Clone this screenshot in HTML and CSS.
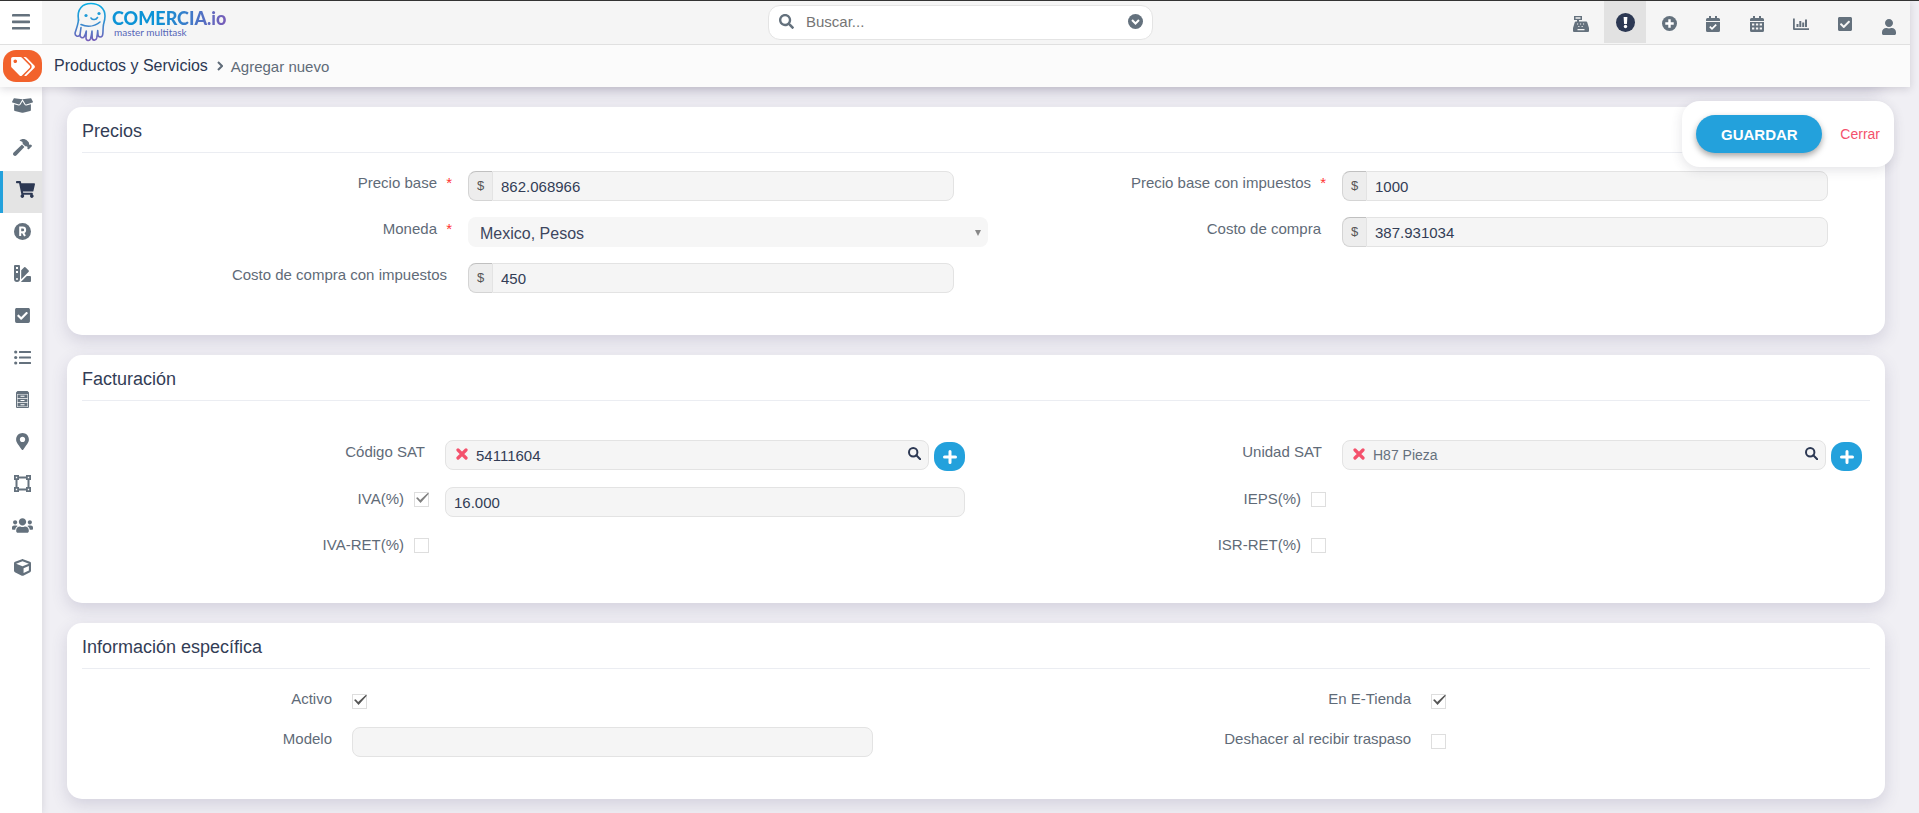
FILE: index.html
```html
<!DOCTYPE html>
<html lang="es">
<head>
<meta charset="utf-8">
<meta name="viewport" content="width=device-width, initial-scale=1">
<title>Comercia.io - Productos y Servicios</title>
<link rel="stylesheet" href="styles.css">
</head>
<body>
<header class="header">
  <div class="topbar">
    <button class="menu-toggle" type="button" aria-label="Menú">
      <svg class="icon icon--18" viewBox="0 0 18 16"><path d="M1 0h16a1 1 0 0 1 1 1v1a.6.6 0 0 1-.6.6H.6A.6.6 0 0 1 0 2V1a1 1 0 0 1 1-1zM.6 6.5h16.800a.6.6 0 0 1 .6.6v1.500a.6.6 0 0 1-.6.6H.6a.6.6 0 0 1-.6-.6V7.100a.6.6 0 0 1 .6-.6zM.6 13h16.800a.6.6 0 0 1 .6.6V15a.6.6 0 0 1-.6.6H.6A.6.6 0 0 1 0 15v-1.400a.6.6 0 0 1 .6-.6z"/></svg>
    </button>
    <a class="logo" href="#" aria-label="Comercia.io">
      <svg class="logo-mark" viewBox="0 0 33 39">
        <defs><linearGradient id="ink" x1="0" y1="0" x2="0" y2="39" gradientUnits="userSpaceOnUse"><stop offset="0" stop-color="#08b0e6"/><stop offset=".5" stop-color="#2f8fd0"/><stop offset="1" stop-color="#7a5cb8"/></linearGradient></defs>
        <g fill="none" stroke="url(#ink)" stroke-width="1.600" stroke-linecap="round" stroke-linejoin="round">
          <path d="M4.500 17.500C2.500 6 9 1 17 1s14 5 14 12.500c0 3.500-.8 6-1.500 8.500-.6 3-.3 6-.7 9.500-.3 4-4.600 4-4.800.5l-.3-4c-.2 3-.5 5-1 7.500-.7 3-4.600 2.800-4.500-.5l-.2-6.500c-.4 3-.8 5.500-1.500 7.800-1 2.700-4.700 2-4.500-1.200l.3-6.600c-.4 2-1.100 4-2 5.500-1.500 2.300-4.700 1-4.300-1.800L7 25"/>
          <path d="M4.500 17.500C4 22 2.500 26 1.200 30c-.8 3.500 3 5 4.600 2.300"/>
          <path d="M7 22c5.500 2.500 13 2.500 19-2.500"/>
          <path d="M17 15.500c1.500 2.200 5 2 6.500-.5"/>
        </g>
        <circle cx="12" cy="13" r="1.600" fill="#1e9bd8"/><circle cx="25" cy="11" r="1.600" fill="#1e9bd8"/>
      </svg>
      <span class="logo-words">
        <span class="logo-name">COMERCIA.io</span>
        <span class="logo-tag">master multitask</span>
      </span>
    </a>
    <form class="search" role="search">
      <svg class="icon icon--15" viewBox="0 0 512 512"><path d="M505 442.700L405.300 343c-4.500-4.500-10.600-7-17-7H372c27.600-35.300 44-79.700 44-128C416 93.100 322.900 0 208 0S0 93.100 0 208s93.100 208 208 208c48.300 0 92.700-16.400 128-44v16.300c0 6.400 2.500 12.500 7 17l99.700 99.700c9.400 9.400 24.600 9.400 33.900 0l28.300-28.300c9.400-9.400 9.400-24.600.1-34zM208 336c-70.700 0-128-57.200-128-128 0-70.700 57.200-128 128-128 70.700 0 128 57.200 128 128 0 70.700-57.200 128-128 128z"/></svg>
      <input class="search-input" type="text" placeholder="Buscar..." aria-label="Buscar">
      <button class="icon-button" type="button" aria-label="Opciones de búsqueda">
        <svg class="icon icon--15" viewBox="0 0 16 16"><circle cx="8" cy="8" r="8"/><path d="M4.300 6.500L8 10.200l3.700-3.700" fill="none" stroke="#fff" stroke-width="2.200"/></svg>
      </button>
    </form>
    <nav class="tools" aria-label="Herramientas">
      <a class="tool" href="#" aria-label="Caja"><svg class="icon icon--16" viewBox="0 0 16 16"><path fill-rule="evenodd" d="M1 0h8v4H6v1.500h7.200a1 1 0 0 1 1 .8L16 12v3a1 1 0 0 1-1 1H1a1 1 0 0 1-1-1v-3l1.800-5.700a1 1 0 0 1 1-.8H4V4H1zM2.500 1.300v1.400h5V1.300zM4 7.500v1.100h1.100V7.500zm3 0v1.100h1.100V7.500zm3 0v1.100h1.100V7.500zM5.300 10v1h1.100v-1zm3.300 0v1h1.100v-1zM4.500 13v1.200h7V13z"/></svg></a>
      <a class="tool tool--active" href="#" aria-label="Avisos"><svg class="icon icon--19" viewBox="0 0 19 19"><circle cx="9.500" cy="9.500" r="9.500"/><path fill="#fff" d="M7.600 4h3.800l-.5 7H8.100z"/><circle cx="9.500" cy="13.500" r="1.700" fill="#fff"/></svg></a>
      <a class="tool" href="#" aria-label="Agregar"><svg class="icon icon--15" viewBox="0 0 16 16"><circle cx="8" cy="8" r="8"/><path d="M8 3.500v9M3.500 8h9" stroke="#fff" stroke-width="2.600"/></svg></a>
      <a class="tool" href="#" aria-label="Agenda"><svg class="icon icon--16" viewBox="0 0 16 16"><path fill-rule="evenodd" d="M4 0h2v2h4V0h2v2h1.500A1.500 1.500 0 0 1 15 3.500V5H1V3.500A1.500 1.500 0 0 1 2.500 2H4zM1 6h14v8.500a1.500 1.500 0 0 1-1.500 1.500h-11A1.500 1.500 0 0 1 1 14.500z"/><path d="M4.800 10.700l2.200 2.200 4.200-4.200" fill="none" stroke="#fff" stroke-width="1.700"/></svg></a>
      <a class="tool" href="#" aria-label="Calendario"><svg class="icon icon--16" viewBox="0 0 16 16"><path fill-rule="evenodd" d="M4 0h2v2h4V0h2v2h1.500A1.500 1.500 0 0 1 15 3.500V5H1V3.500A1.500 1.500 0 0 1 2.500 2H4zM1 6h14v8.500a1.500 1.500 0 0 1-1.500 1.500h-11A1.500 1.500 0 0 1 1 14.500zM3 7.500v2h2.300v-2zm3.900 0v2h2.300v-2zm3.800 0v2H13v-2zM3 11.500v2h2.300v-2zm3.900 0v2h2.300v-2zm3.800 0v2H13v-2z"/></svg></a>
      <a class="tool" href="#" aria-label="Reportes"><svg class="icon icon--16" viewBox="0 0 16 16"><path d="M0 2.500h1.800v9.700H16V14H1a1 1 0 0 1-1-1zM3.500 8h2v3h-2zM6.300 5h2v6h-2zM9.200 6.500h2V11h-2zM12 3.500h2V11h-2z"/></svg></a>
      <a class="tool" href="#" aria-label="Tareas"><svg class="icon icon--16" viewBox="0 0 448 512"><path d="M400 480H48c-26.510 0-48-21.490-48-48V80c0-26.510 21.490-48 48-48h352c26.510 0 48 21.490 48 48v352c0 26.510-21.490 48-48 48zm-204.686-98.059l184-184c6.248-6.248 6.248-16.379 0-22.627l-22.627-22.627c-6.248-6.248-16.379-6.249-22.628 0L184 302.745l-70.059-70.059c-6.248-6.248-16.379-6.248-22.628 0l-22.627 22.627c-6.248 6.248-6.248 16.379 0 22.627l104 104c6.249 6.250 16.379 6.250 22.628.001z"/></svg></a>
      <a class="tool tool--user" href="#" aria-label="Usuario"><svg class="icon icon--16" viewBox="0 0 448 512"><path d="M224 256c70.700 0 128-57.300 128-128S294.700 0 224 0 96 57.300 96 128s57.300 128 128 128zm89.600 32h-16.700c-22.200 10.200-46.900 16-72.900 16s-50.600-5.800-72.900-16h-16.700C60.200 288 0 348.200 0 422.400V464c0 26.500 21.500 48 48 48h352c26.500 0 48-21.500 48-48v-41.600c0-74.200-60.200-134.400-134.400-134.400z"/></svg></a>
    </nav>
  </div>
  <div class="crumbs">
    <span class="crumb-badge"><svg class="icon icon--tags" viewBox="0 0 640 512"><path d="M497.941 225.941L286.059 14.059A48 48 0 0 0 252.118 0H48C21.490 0 0 21.490 0 48v204.118a48 48 0 0 0 14.059 33.941l211.882 211.882c18.744 18.745 49.136 18.746 67.882 0l204.118-204.118c18.745-18.745 18.745-49.137 0-67.882zM112 160c-26.510 0-48-21.490-48-48s21.490-48 48-48 48 21.490 48 48-21.490 48-48 48zm513.941 133.823L421.823 497.941c-18.745 18.745-49.137 18.745-67.882 0l-.36-.36L527.640 323.522c16.999-16.999 26.360-39.600 26.360-63.640s-9.362-46.641-26.360-63.640L331.397 0h48.721a48 48 0 0 1 33.941 14.059l211.882 211.882c18.745 18.745 18.745 49.137 0 67.882z"/></svg></span>
    <a class="crumb-link" href="#">Productos y Servicios</a>
    <svg class="crumb-arrow" viewBox="0 0 6 10"><path d="M1 1l4 4-4 4"/></svg>
    <span class="crumb-current">Agregar nuevo</span>
  </div>
</header>

<div class="body">
  <nav class="sidebar" aria-label="Secciones">
    <a class="side" href="#" aria-label="Productos"><svg class="icon icon--21" viewBox="0 0 640 512"><path d="M425.700 256c-16.900 0-32.800-9-41.400-23.400L320 126l-64.200 106.600c-8.700 14.500-24.600 23.500-41.500 23.500-4.500 0-9-.6-13.300-1.900L64 215v178c0 14.700 10 27.500 24.200 31l216.200 54.100c10.200 2.500 20.900 2.500 31 0L551.800 424c14.200-3.600 24.200-16.400 24.200-31V215l-137 39.100c-4.300 1.300-8.800 1.900-13.300 1.900zm212.600-112.200L586.800 41c-3.100-6.200-9.800-9.800-16.700-8.900L320 64l91.700 152.100c3.800 6.300 11.400 9.300 18.500 7.300l197.900-56.500c9.900-2.900 14.700-13.900 10.200-23.100zM53.200 41L1.700 143.800c-4.600 9.200.3 20.200 10.100 23l197.900 56.500c7.100 2 14.700-1 18.500-7.300L320 64 69.800 32.100c-6.900-.8-13.500 2.700-16.600 8.900z"/></svg></a>
    <a class="side" href="#" aria-label="Servicios"><svg class="icon icon--19" viewBox="0 0 576 512"><path d="M571.310 193.940l-22.630-22.630c-6.250-6.250-16.380-6.250-22.630 0l-11.310 11.310-28.900-28.900c5.630-21.310.36-44.900-16.350-61.610l-45.250-45.250c-62.480-62.480-163.790-62.480-226.280 0l90.510 45.250v18.750c0 16.970 6.740 33.250 18.750 45.250l49.140 49.140c16.710 16.710 40.300 21.980 61.610 16.350l28.900 28.900-11.310 11.310c-6.250 6.250-6.250 16.380 0 22.630l22.630 22.630c6.250 6.250 16.380 6.250 22.630 0l90.510-90.510c6.230-6.240 6.230-16.370-.02-22.620zm-286.720-15.200c-3.700-3.700-6.840-7.790-9.850-11.950L19.640 404.960c-25.570 23.880-26.260 64.190-1.530 88.930s65.050 24.050 88.920-1.530l238.130-255.070c-3.960-2.910-7.900-5.870-11.440-9.410l-49.130-49.140z"/></svg></a>
    <a class="side side--active" href="#" aria-label="Ventas"><svg class="icon icon--19" viewBox="0 0 576 512"><path d="M528.120 301.319l47.273-208C578.806 78.301 567.391 64 551.990 64H159.208l-9.166-44.810C147.758 8.021 137.930 0 126.529 0H24C10.745 0 0 10.745 0 24v16c0 13.255 10.745 24 24 24h69.883l70.248 343.435C147.325 417.100 136 435.222 136 456c0 30.928 25.072 56 56 56s56-25.072 56-56c0-15.674-6.447-29.835-16.824-40h209.647C430.447 426.165 424 440.326 424 456c0 30.928 25.072 56 56 56s56-25.072 56-56c0-22.172-12.888-41.332-31.579-50.405l5.517-24.276c3.413-15.018-8.002-29.319-23.403-29.319H218.117l-6.545-32h293.145c11.206 0 20.920-7.754 23.403-18.681z"/></svg></a>
    <a class="side" href="#" aria-label="Marcas"><svg class="icon icon--17" viewBox="0 0 17 17"><circle cx="8.500" cy="8.500" r="8.500"/><path d="M6.200 13V4.600h2.600a2.300 2.300 0 0 1 0 4.700H6.200M8.800 9.300L11 13" fill="none" stroke="#fff" stroke-width="2"/></svg></a>
    <a class="side" href="#" aria-label="Colores"><svg class="icon icon--17" viewBox="0 0 17 17"><path fill-rule="evenodd" d="M1 0h4a1 1 0 0 1 1 1v13a3 3 0 0 1-6 0V1a1 1 0 0 1 1-1zM2 2v2h2V2zm0 4v2h2V6zm1 7a1 1 0 1 0 0 2 1 1 0 0 0 0-2z"/><path d="M7.200 5.300l3-3a.9.9 0 0 1 1.200 0l3.300 3.300a.9.9 0 0 1 0 1.200l-7.500 7.500zM16 11a1 1 0 0 1 1 1v4a1 1 0 0 1-1 1H6.800l6-6z"/></svg></a>
    <a class="side" href="#" aria-label="Tareas"><svg class="icon icon--17" viewBox="0 0 448 512"><path d="M400 480H48c-26.510 0-48-21.490-48-48V80c0-26.510 21.490-48 48-48h352c26.510 0 48 21.490 48 48v352c0 26.510-21.490 48-48 48zm-204.686-98.059l184-184c6.248-6.248 6.248-16.379 0-22.627l-22.627-22.627c-6.248-6.248-16.379-6.249-22.628 0L184 302.745l-70.059-70.059c-6.248-6.248-16.379-6.248-22.628 0l-22.627 22.627c-6.248 6.248-6.248 16.379 0 22.627l104 104c6.249 6.250 16.379 6.250 22.628.001z"/></svg></a>
    <a class="side" href="#" aria-label="Listas"><svg class="icon icon--17" viewBox="0 0 17 17"><circle cx="1.700" cy="3" r="1.600"/><circle cx="1.700" cy="8.500" r="1.600"/><circle cx="1.700" cy="14" r="1.600"/><path d="M5.500 2h11a.5.5 0 0 1 .5.500v1a.5.5 0 0 1-.5.500h-11a.5.5 0 0 1-.5-.5v-1a.5.5 0 0 1 .5-.5zm0 5.500h11a.5.5 0 0 1 .5.500v1a.5.5 0 0 1-.5.500h-11A.5.5 0 0 1 5 9V8a.5.5 0 0 1 .5-.5zm0 5.500h11a.5.5 0 0 1 .5.500v1a.5.5 0 0 1-.5.500h-11a.5.5 0 0 1-.5-.5v-1a.5.5 0 0 1 .5-.5z"/></svg></a>
    <a class="side" href="#" aria-label="Almacén"><svg class="icon icon--17" viewBox="0 0 17 17"><path fill-rule="evenodd" d="M3.500 0h10L15 1.500V16a1 1 0 0 1-1 1H3a1 1 0 0 1-1-1V1.500zM3.100 3v12.900h10.800V3z"/><path fill-rule="evenodd" d="M3.600 3.500h9.800v3.600H3.600zm2.900 1.300v1h4v-1zM3.600 7.800h9.800v3.500H3.600zM6.500 9v1h4V9zM3.600 12h9.800v3.400H3.600zm2.900 1.200v1h4v-1z"/></svg></a>
    <a class="side" href="#" aria-label="Ubicaciones"><svg class="icon icon--17" viewBox="0 0 384 512"><path d="M172.268 501.670C26.970 291.031 0 269.413 0 192 0 85.961 85.961 0 192 0s192 85.961 192 192c0 77.413-26.970 99.031-172.268 309.670-9.535 13.774-29.930 13.773-39.464 0zM192 272c44.183 0 80-35.817 80-80s-35.817-80-80-80-80 35.817-80 80 35.817 80 80 80z"/></svg></a>
    <a class="side" href="#" aria-label="Zonas"><svg class="icon icon--17" viewBox="0 0 17 17"><path fill-rule="evenodd" d="M0 0h5v1.500h7V0h5v5h-1.500v7H17v5h-5v-1.500H5V17H0v-5h1.500V5H0zm5 3.500V5H3.500v7H5v1.500h7V12h1.500V5H12V3.500zM1.800 1.800v1.400h1.400V1.800zm12 0v1.400h1.400V1.800zm-12 12v1.400h1.400v-1.400zm12 0v1.400h1.400v-1.400z"/></svg></a>
    <a class="side" href="#" aria-label="Clientes"><svg class="icon icon--21" viewBox="0 0 640 512"><path d="M96 224c35.300 0 64-28.700 64-64s-28.700-64-64-64-64 28.700-64 64 28.700 64 64 64zm448 0c35.300 0 64-28.700 64-64s-28.700-64-64-64-64 28.700-64 64 28.700 64 64 64zm32 32h-64c-17.600 0-33.500 7.100-45.100 18.600 40.300 22.100 68.900 62 75.100 109.400h66c17.700 0 32-14.300 32-32v-32c0-35.300-28.700-64-64-64zm-256 0c61.900 0 112-50.100 112-112S381.900 32 320 32 208 82.100 208 144s50.100 112 112 112zm76.800 32h-8.300c-20.800 10-43.900 16-68.500 16s-47.600-6-68.500-16h-8.300C179.600 288 128 339.600 128 403.200V432c0 26.500 21.500 48 48 48h288c26.500 0 48-21.500 48-48v-28.800c0-63.600-51.600-115.200-115.200-115.200zm-223.700-13.400C161.500 263.100 145.600 256 128 256H64c-35.300 0-64 28.700-64 64v32c0 17.700 14.300 32 32 32h65.900c6.300-47.400 34.900-87.300 75.200-109.400z"/></svg></a>
    <a class="side" href="#" aria-label="Paquetes"><svg class="icon icon--17" viewBox="0 0 512 512"><path d="M239.100 6.300l-208 78c-18.700 7-31.100 25-31.100 45v225.100c0 18.200 10.300 34.800 26.500 42.900l208 104c13.500 6.800 29.400 6.800 42.900 0l208-104c16.300-8.100 26.500-24.800 26.500-42.900V129.300c0-20-12.400-37.900-31.100-44.900l-208-78C262 2.200 250 2.200 239.100 6.300zM256 68.400l192 72v1.100l-192 78-192-78v-1.100l192-72zm32 356V275.500l160-65v133.900l-160 80z"/></svg></a>
  </nav>

  <main class="content">
    <div class="card-tail"></div>

    <section class="card">
      <h2 class="card-title">Precios</h2>
      <div class="fields fields--prices">
        <label class="label label--required" for="base">Precio base <span class="star">*</span></label>
        <div class="money"><span class="money-sign">$</span><input class="money-input" id="base" type="text" value="862.068966"></div>
        <label class="label label--required" for="base-tax">Precio base con impuestos <span class="star">*</span></label>
        <div class="money"><span class="money-sign">$</span><input class="money-input" id="base-tax" type="text" value="1000"></div>

        <label class="label label--required" for="currency">Moneda <span class="star">*</span></label>
        <div class="select"><select class="select-box" id="currency"><option>Mexico, Pesos</option></select></div>
        <label class="label" for="cost">Costo de compra</label>
        <div class="money"><span class="money-sign">$</span><input class="money-input" id="cost" type="text" value="387.931034"></div>

        <label class="label" for="cost-tax">Costo de compra con impuestos</label>
        <div class="money"><span class="money-sign">$</span><input class="money-input" id="cost-tax" type="text" value="450"></div>
      </div>
    </section>

    <section class="card">
      <h2 class="card-title">Facturación</h2>
      <div class="fields fields--billing">
        <label class="label" for="sat-code">Código SAT</label>
        <div class="lookup-row">
          <div class="lookup">
            <button class="icon-button icon-button--clear" type="button" aria-label="Quitar código"><svg class="icon icon--12" viewBox="0 0 12 12"><path d="M2 2l8 8M10 2l-8 8"/></svg></button>
            <input class="lookup-input" id="sat-code" type="text" value="54111604">
            <button class="icon-button icon-button--find" type="button" aria-label="Buscar código"><svg class="icon icon--13" viewBox="0 0 13 13"><circle cx="5.200" cy="5.200" r="4.200"/><path d="M8.300 8.300l3.900 3.900"/></svg></button>
          </div>
          <button class="add" type="button" aria-label="Agregar código"><svg class="icon icon--14" viewBox="0 0 14 14"><path d="M7 1.500v11M1.500 7h11"/></svg></button>
        </div>
        <label class="label" for="sat-unit">Unidad SAT</label>
        <div class="lookup-row">
          <div class="lookup">
            <button class="icon-button icon-button--clear" type="button" aria-label="Quitar unidad"><svg class="icon icon--12" viewBox="0 0 12 12"><path d="M2 2l8 8M10 2l-8 8"/></svg></button>
            <input class="lookup-input lookup-input--small" id="sat-unit" type="text" value="H87 Pieza">
            <button class="icon-button icon-button--find" type="button" aria-label="Buscar unidad"><svg class="icon icon--13" viewBox="0 0 13 13"><circle cx="5.200" cy="5.200" r="4.200"/><path d="M8.300 8.300l3.900 3.900"/></svg></button>
          </div>
          <button class="add" type="button" aria-label="Agregar unidad"><svg class="icon icon--14" viewBox="0 0 14 14"><path d="M7 1.500v11M1.500 7h11"/></svg></button>
        </div>

        <label class="label label--check" for="iva">IVA(%) <input class="check check--soft" id="iva" type="checkbox" checked></label>
        <input class="text-input" type="text" value="16.000" aria-label="Porcentaje de IVA">
        <label class="label label--check" for="ieps">IEPS(%) <input class="check" id="ieps" type="checkbox"></label>
        <span></span>

        <label class="label label--check" for="iva-ret">IVA-RET(%) <input class="check" id="iva-ret" type="checkbox"></label>
        <span></span>
        <label class="label label--check" for="isr-ret">ISR-RET(%) <input class="check" id="isr-ret" type="checkbox"></label>
      </div>
    </section>

    <section class="card">
      <h2 class="card-title">Información específica</h2>
      <div class="fields fields--specific">
        <label class="label" for="active">Activo</label>
        <div class="check-cell"><input class="check" id="active" type="checkbox" checked></div>
        <label class="label" for="shop">En E-Tienda</label>
        <div class="check-cell"><input class="check" id="shop" type="checkbox" checked></div>

        <label class="label" for="model">Modelo</label>
        <input class="text-input" id="model" type="text">
        <label class="label" for="undo">Deshacer al recibir traspaso</label>
        <div class="check-cell"><input class="check" id="undo" type="checkbox"></div>
      </div>
    </section>
  </main>
</div>

<div class="actions">
  <button class="save" type="button">GUARDAR</button>
  <a class="close" href="#">Cerrar</a>
</div>
</body>
</html>
```
FILE: styles.css
```css
* {
  box-sizing: border-box;
}

body {
  margin: 0;
  height: 100vh;
  overflow: hidden;
  display: flex;
  flex-direction: column;
  background: #f0eff4;
  font-family: "Liberation Sans", Arial, sans-serif;
  font-size: 15px;
  color: #5f6b78;
}

a {
  text-decoration: none;
}

input,
select,
button {
  font-family: inherit;
  margin: 0;
}

/* Icons */
.icon {
  display: block;
  fill: #64717d;
}

.icon--12 { width: 12px; height: 12px; }
.icon--13 { width: 13px; height: 13px; }
.icon--14 { width: 14px; height: 14px; }
.icon--15 { width: 15px; height: 15px; }
.icon--16 { width: 16px; height: 16px; }
.icon--17 { width: 17px; height: 17px; }
.icon--18 { width: 18px; height: 16px; }
.icon--19 { width: 19px; height: 19px; }
.icon--21 { width: 21px; height: 17px; }

.icon--tags {
  width: 24px;
  height: 19px;
  fill: #fff;
}

.icon-button {
  display: block;
  flex: none;
  padding: 0;
  border: 0;
  background: none;
}

.icon-button--clear .icon {
  fill: none;
  stroke: #f4516c;
  stroke-width: 3.2;
  stroke-linecap: round;
}

.icon-button--find .icon {
  fill: none;
  stroke: #2c3853;
  stroke-width: 2;
  stroke-linecap: round;
}

/* Header */
.header {
  position: relative;
  z-index: 2;
  flex: none;
  margin-right: 9px;
  box-shadow: 0 2px 8px rgba(60, 58, 80, 0.18);
}

.header::before {
  content: "";
  display: block;
  height: 1px;
  margin-right: -9px;
  background: #333;
}

.topbar {
  display: grid;
  grid-template-columns: 42px 726fr 385px 757fr;
  height: 44px;
  background: #f5f5f5;
  border-bottom: 1px solid #e0e0e0;
}

.menu-toggle {
  display: grid;
  place-items: center;
  padding: 0 0 2px;
  border: 0;
  background: #fff;
}

.logo {
  display: flex;
  align-items: flex-start;
  gap: 5px;
  padding: 1px 0 0 32px;
}

.logo-mark {
  width: 33px;
  height: 40px;
}

.logo-words {
  display: flex;
  flex-direction: column;
  padding-top: 7px;
}

.logo-name {
  font: 900 18px/18px Lato, sans-serif;
  color: transparent;
  background: linear-gradient(100deg, #0c93d6 40%, #7a5cb8);
  -webkit-background-clip: text;
  background-clip: text;
}

.logo-tag {
  font: 400 10px/10px Lato, sans-serif;
  padding-left: 2px;
  color: #5666b8;
}

.search {
  display: flex;
  align-items: center;
  gap: 12px;
  height: 35px;
  margin-top: 4px;
  padding: 0 9px 2px 10px;
  border: 1px solid #e4e4e4;
  border-radius: 12px;
  background: #fff;
}

.search-input {
  flex: 1;
  min-width: 0;
  padding: 0;
  border: 0;
  outline: 0;
  font-size: 15px;
  background: none;
}

.search-input::placeholder {
  color: #757575;
}

.tools {
  display: flex;
  justify-content: flex-end;
  gap: 2px;
}

.tool {
  display: grid;
  place-items: center;
  width: 42px;
  height: 42px;
  padding-top: 3px;
}

.tool--active {
  padding-top: 0;
  background: #e2e2e2;
}

.tool--active .icon {
  fill: #2c3853;
}

.tool--user {
  padding-top: 10px;
}

.crumbs {
  display: flex;
  align-items: center;
  height: 42px;
  padding-left: 3px;
  background: #fbfbfb;
}

.crumb-badge {
  display: grid;
  place-items: center;
  width: 39px;
  height: 32px;
  border-radius: 13px;
  background: #f2622c;
}

.crumb-link {
  margin-left: 12px;
  font-size: 16px;
  color: #2c3853;
}

.crumb-arrow {
  width: 6px;
  height: 10px;
  margin: 0 8px 0 9px;
  fill: none;
  stroke: #5f6b78;
  stroke-width: 2;
}

/* Page body */
.body {
  flex: 1;
  min-height: 0;
  display: flex;
}

.sidebar {
  flex: none;
  width: 42px;
  background: #fff;
  box-shadow: 0 0 8px rgba(60, 58, 80, 0.16);
}

.side {
  display: grid;
  place-items: center;
  height: 42px;
  padding: 0 0 5px 3px;
}

.side--active {
  padding-left: 6px;
  border-left: 3px solid #23a1dc;
  background: #e4e4e4;
}

.side--active .icon {
  fill: #2c3853;
}

.content {
  flex: 1;
  min-width: 0;
  display: flex;
  flex-direction: column;
  gap: 20px;
  padding: 0 34px 0 25px;
}

.card,
.card-tail {
  flex: none;
  border-radius: 15px;
  background: #fff;
  box-shadow: 0 6px 16px rgba(69, 65, 110, 0.17);
}

/* Bottom edge of the block scrolled away under the header */
.card-tail {
  height: 40px;
  margin-top: -40px;
}

.card {
  padding: 0 15px 42px;
}

.card-title {
  margin: 0;
  padding: 12px 0 9px;
  border-bottom: 1px solid #ebedf2;
  font-size: 18px;
  font-weight: 400;
  line-height: 24px;
  color: #333d56;
}

.fields {
  display: grid;
  row-gap: 16px;
  padding: 18px 8px 0 0;
}

.fields--prices {
  grid-template-columns: 386fr 520fr 354fr 520fr;
}

.fields--billing {
  grid-template-columns: 363fr 520fr 377fr 520fr;
  padding: 39px 8px 6px 0;
}

.fields--specific {
  grid-template-columns: 270fr 521fr 558fr 431fr;
}

.label {
  padding: 2px 20px 0 0;
  line-height: 20px;
  text-align: right;
  white-space: nowrap;
}

.fields--prices .label {
  padding-right: 21px;
}

.fields--prices .label--required {
  padding-right: 16px;
}

.label--check {
  display: flex;
  align-items: flex-start;
  justify-content: flex-end;
  gap: 10px;
  padding-right: 16px;
}

.label--check .check {
  margin-top: 3px;
}

.star {
  margin-left: 5px;
  color: #f33;
}

.money {
  display: flex;
  width: 486px;
  max-width: 94%;
  height: 30px;
}

.money-sign {
  display: grid;
  place-items: center;
  width: 24px;
  padding-bottom: 2px;
  border: 1px solid #d4d4d4;
  border-top-color: #c0c0c0;
  border-right: 0;
  border-radius: 8px 0 0 8px;
  background: #ededed;
  font-size: 13px;
  color: #555;
}

.money-input,
.text-input,
.lookup {
  border: 1px solid #e3e3e3;
  background: #f5f5f5;
  height: 30px;
}

.money-input,
.text-input {
  min-width: 0;
  padding: 0 8px;
  font-size: 15px;
  color: #333d56;
}

.money-input {
  flex: 1;
  border-radius: 0 8px 8px 0;
}

.text-input {
  width: 100%;
  border-radius: 8px;
}

.select {
  position: relative;
}

.select::after {
  content: "";
  position: absolute;
  right: 7px;
  top: 13px;
  border: 3px solid transparent;
  border-top: 6px solid #888;
  border-bottom: 0;
}

.select-box {
  appearance: none;
  width: 100%;
  height: 30px;
  padding: 2px 12px 0;
  border: 0;
  border-radius: 8px;
  background: #f6f6f6;
  font-size: 16px;
  color: #3d465e;
}

.lookup-row {
  display: flex;
  align-items: flex-start;
  gap: 5px;
}

.lookup {
  flex: 1;
  min-width: 0;
  display: flex;
  align-items: center;
  gap: 8px;
  padding: 0 7px 0 10px;
  border-radius: 8px;
}

.lookup .icon-button {
  padding-bottom: 3px;
}

.lookup-input {
  flex: 1;
  min-width: 0;
  padding: 0;
  border: 0;
  background: none;
  font-size: 15px;
  color: #333d56;
}

.lookup-input--small {
  font-size: 14px;
  color: #66717d;
}

.add {
  display: grid;
  place-items: center;
  width: 31px;
  height: 29px;
  margin-top: 2px;
  padding: 0;
  border: 0;
  border-radius: 13px;
  background: #23a1dc;
}

.add .icon {
  stroke: #fff;
  stroke-width: 3;
  stroke-linecap: round;
}

/* Tick boxes */
.check {
  appearance: none;
  display: block;
  flex: none;
  width: 15px;
  height: 15px;
  border: 1px solid #dedede;
  background: #fff;
}

.check:checked::before {
  content: "";
  display: block;
  width: 13px;
  height: 10px;
  margin-left: 1px;
  background: #555;
  clip-path: polygon(0 50%, 13% 43%, 32% 70%, 90% 0, 100% 4%, 35% 100%);
}

.check--soft:checked::before {
  background: #808080;
}

.check-cell {
  padding-top: 7px;
  min-height: 24px;
}

/* Floating actions */
.actions {
  position: absolute;
  z-index: 3;
  top: 101px;
  right: 25px;
  display: flex;
  align-items: center;
  gap: 18px;
  padding: 14px;
  border-radius: 18px;
  background: #fff;
  box-shadow: 0 3px 12px rgba(60, 58, 80, 0.14);
}

.save {
  width: 126px;
  height: 38px;
  padding: 0;
  border: 0;
  border-radius: 19px;
  background: #23a1dc;
  box-shadow: 0 3px 6px rgba(0, 0, 0, 0.35);
  font-size: 15px;
  font-weight: 700;
  color: #fff;
}

.close {
  font-size: 14px;
  color: #f4516c;
}
```
